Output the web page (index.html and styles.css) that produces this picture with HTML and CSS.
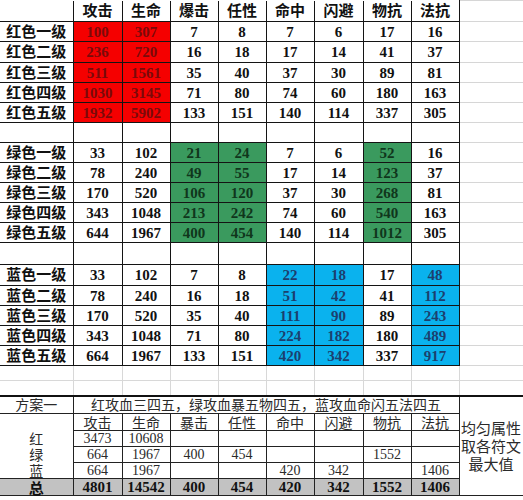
FILE: index.html
```html
<!DOCTYPE html>
<html lang="zh">
<head>
<meta charset="utf-8">
<link rel="stylesheet" href="styles.css">
</head>
<body>
<table class="sheet">
  <colgroup>
    <col class="c0"><col class="c49"><col class="c48"><col class="c48"><col class="c48"><col class="c48"><col class="c49"><col class="c48"><col class="c48"><col class="cx">
  </colgroup>
  <tbody class="up">
    <tr class="h21 head"><td class="lbl"></td><td>攻击</td><td>生命</td><td>爆击</td><td>任性</td><td>命中</td><td>闪避</td><td>物抗</td><td>法抗</td><td class="x"></td></tr>
    <tr class="h20"><td class="lbl">红色一级</td><td class="red">100</td><td class="red">307</td><td>7</td><td>8</td><td>7</td><td>6</td><td>17</td><td>16</td><td class="x"></td></tr>
    <tr class="h21"><td class="lbl">红色二级</td><td class="red">236</td><td class="red">720</td><td>16</td><td>18</td><td>17</td><td>14</td><td>41</td><td>37</td><td class="x"></td></tr>
    <tr class="h20"><td class="lbl">红色三级</td><td class="red">511</td><td class="red">1561</td><td>35</td><td>40</td><td>37</td><td>30</td><td>89</td><td>81</td><td class="x"></td></tr>
    <tr class="h20"><td class="lbl">红色四级</td><td class="red">1030</td><td class="red">3145</td><td>71</td><td>80</td><td>74</td><td>60</td><td>180</td><td>163</td><td class="x"></td></tr>
    <tr class="h20"><td class="lbl">红色五级</td><td class="red">1932</td><td class="red">5902</td><td>133</td><td>151</td><td>140</td><td>114</td><td>337</td><td>305</td><td class="x"></td></tr>
    <tr class="h20"><td class="lbl"></td><td></td><td></td><td></td><td></td><td></td><td></td><td></td><td></td><td class="x"></td></tr>
    <tr class="h20"><td class="lbl">绿色一级</td><td>33</td><td>102</td><td class="grn">21</td><td class="grn">24</td><td>7</td><td>6</td><td class="grn">52</td><td>16</td><td class="x"></td></tr>
    <tr class="h20"><td class="lbl">绿色二级</td><td>78</td><td>240</td><td class="grn">49</td><td class="grn">55</td><td>17</td><td>14</td><td class="grn">123</td><td>37</td><td class="x"></td></tr>
    <tr class="h20"><td class="lbl">绿色三级</td><td>170</td><td>520</td><td class="grn">106</td><td class="grn">120</td><td>37</td><td>30</td><td class="grn">268</td><td>81</td><td class="x"></td></tr>
    <tr class="h20"><td class="lbl">绿色四级</td><td>343</td><td>1048</td><td class="grn">213</td><td class="grn">242</td><td>74</td><td>60</td><td class="grn">540</td><td>163</td><td class="x"></td></tr>
    <tr class="h20"><td class="lbl">绿色五级</td><td>644</td><td>1967</td><td class="grn">400</td><td class="grn">454</td><td>140</td><td>114</td><td class="grn">1012</td><td>305</td><td class="x"></td></tr>
    <tr class="h22"><td class="lbl"></td><td></td><td></td><td></td><td></td><td></td><td></td><td></td><td></td><td class="x"></td></tr>
    <tr class="h21"><td class="lbl">蓝色一级</td><td>33</td><td>102</td><td>7</td><td>8</td><td class="blu">22</td><td class="blu">18</td><td>17</td><td class="blu">48</td><td class="x"></td></tr>
    <tr class="h20"><td class="lbl">蓝色二级</td><td>78</td><td>240</td><td>16</td><td>18</td><td class="blu">51</td><td class="blu">42</td><td>41</td><td class="blu">112</td><td class="x"></td></tr>
    <tr class="h20"><td class="lbl">蓝色三级</td><td>170</td><td>520</td><td>35</td><td>40</td><td class="blu">111</td><td class="blu">90</td><td>89</td><td class="blu">243</td><td class="x"></td></tr>
    <tr class="h20"><td class="lbl">蓝色四级</td><td>343</td><td>1048</td><td>71</td><td>80</td><td class="blu">224</td><td class="blu">182</td><td>180</td><td class="blu">489</td><td class="x"></td></tr>
    <tr class="h20"><td class="lbl">蓝色五级</td><td>664</td><td>1967</td><td>133</td><td>151</td><td class="blu">420</td><td class="blu">342</td><td>337</td><td class="blu">917</td><td class="x"></td></tr>
  </tbody>
  <tbody class="gap">
    <tr class="h15"><td></td><td></td><td></td><td></td><td></td><td></td><td></td><td></td><td></td><td></td></tr>
    <tr class="h15"><td></td><td></td><td></td><td></td><td></td><td></td><td></td><td></td><td></td><td></td></tr>
  </tbody>
  <tbody class="low">
    <tr class="h18 plan"><td class="l0">方案一</td><td colspan="8" class="title">红攻血三四五，绿攻血暴五物四五，蓝攻血命闪五法四五</td><td rowspan="6" class="note">均匀属性<br>取各符文<br>最大值</td></tr>
    <tr class="h17"><td class="l0 nb"></td><td class="cn">攻击</td><td class="cn">生命</td><td class="cn">暴击</td><td class="cn">任性</td><td class="cn">命中</td><td class="cn">闪避</td><td class="cn">物抗</td><td class="cn">法抗</td></tr>
    <tr class="h16"><td class="l0 nb">红</td><td>3473</td><td>10608</td><td></td><td></td><td></td><td></td><td></td><td></td></tr>
    <tr class="h16"><td class="l0 nb">绿</td><td>664</td><td>1967</td><td>400</td><td>454</td><td></td><td></td><td>1552</td><td></td></tr>
    <tr class="h16"><td class="l0 nb">蓝</td><td>664</td><td>1967</td><td></td><td></td><td>420</td><td>342</td><td></td><td>1406</td></tr>
    <tr class="h17 total"><td class="l0">总</td><td>4801</td><td>14542</td><td>400</td><td>454</td><td>420</td><td>342</td><td>1552</td><td>1406</td></tr>
  </tbody>
</table>
</body>
</html>
```

FILE: styles.css
```css
html, body {
  margin: 0;
  padding: 0;
  background: #ffffff;
}

.sheet {
  width: 523px;
  table-layout: fixed;
  border-collapse: collapse;
  font-family: "Liberation Serif", "Noto Sans CJK SC", serif;
  color: #111;
}

.c0 { width: 73px; }
.c49 { width: 49px; }
.c48 { width: 48px; }
.cx { width: 64px; }

.sheet td {
  padding: 0;
  text-align: center;
  vertical-align: middle;
  line-height: 14px;
  white-space: nowrap;
}

.h15 { height: 15px; }
.h16 { height: 16px; }
.h17 { height: 17px; }
.h18 { height: 18px; }
.h20 { height: 20px; }
.h21 { height: 21px; }
.h22 { height: 22px; }

/* upper table */
.up td {
  border: 1px solid #141414;
  font-size: 15px;
  font-weight: 700;
}

.up .head td {
  border-top: none;
}

.up td.lbl {
  border-left: none;
}

.up td.x {
  border-top: 1px solid #d6d6d6;
  border-bottom: 1px solid #d6d6d6;
  border-right: none;
}

.up td.red {
  background: #f50000;
  color: #7a0a0a;
}

.up td.grn {
  background: #3a9a5e;
  color: #10361c;
}

.up td.blu {
  background: #0ab2ee;
  color: #1c3f6e;
}

/* blank rows between tables */
.gap td {
  border: 1px solid #d8d8d8;
  border-bottom: none;
}

.gap td:first-child {
  border-left: none;
}

/* lower table */
.low td {
  border: 1px solid #222;
  font-size: 14px;
  font-weight: 400;
  color: #2a2a2a;
  line-height: 13px;
}

.low .plan td {
  border-top: 2px solid #111;
}

.low td.l0 {
  border-left: none;
  font-family: "Noto Sans CJK SC", sans-serif;
  font-size: 14px;
}

.low td.cn {
  font-family: "Noto Sans CJK SC", sans-serif;
}

.low td.nb {
  border-top: none;
  border-bottom: none;
}

.low td.title {
  font-family: "Noto Sans CJK SC", sans-serif;
  font-size: 14px;
}

.low td.note {
  border-right: 1px solid #222;
  font-family: "Noto Sans CJK SC", sans-serif;
  font-size: 15px;
  line-height: 18px;
  white-space: normal;
}

.low tr.total td {
  background: #c2c2c2;
  font-weight: 700;
  color: #111;
  font-size: 15px;
}

.low tr.total td.l0 {
  border-top: 1px solid #222;
}
```
